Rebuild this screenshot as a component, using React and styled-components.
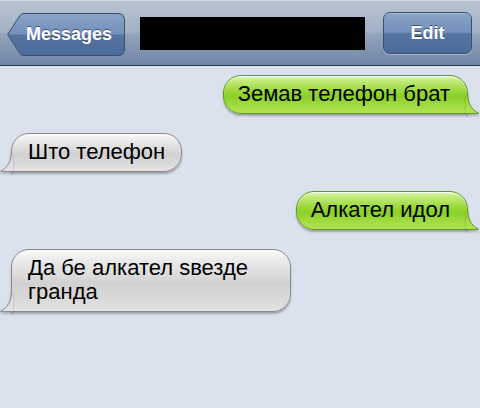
import styled, { createGlobalStyle } from 'styled-components'

const GlobalStyle = createGlobalStyle`
  html, body {
    margin: 0;
    padding: 0;
    background: #dbe2ed;
    font-family: "Liberation Sans", Arial, sans-serif;
  }
`

const Screen = styled.div`
  width: 480px;
  height: 408px;
  overflow: hidden;
  background: #dbe2ed;
`

const NavBar = styled.div`
  height: 66px;
  display: flex;
  align-items: center;
  padding: 0 8px 0 7px;
  border-bottom: 1px solid #2f3a4a;
  border-top: 1px solid #cfd6e0;
  box-sizing: border-box;
  background: linear-gradient(to bottom, #b9c4d3 0%, #a3b1c5 48%, #93a4bb 52%, #7086a5 100%);
`

const BackButton = styled.div`
  position: relative;
  width: 118px;
  height: 43px;
  margin-top: 2px;
  display: flex;
  align-items: center;
  justify-content: center;
  padding-left: 6px;
  box-sizing: border-box;

  & svg {
    position: absolute;
    inset: 0;
  }
`

const ButtonLabel = styled.span`
  position: relative;
  color: #fff;
  font-size: 18px;
  font-weight: bold;
  text-shadow: 0 -1px 0 rgba(0, 0, 0, 0.45);
`

const TitleBlock = styled.div`
  width: 225px;
  height: 33px;
  margin-left: 15px;
  background: #000;
`

const EditButton = styled.div`
  margin-left: auto;
  width: 89px;
  height: 42px;
  display: flex;
  align-items: center;
  justify-content: center;
  box-sizing: border-box;
  border: 1px solid #3c4e69;
  border-radius: 7px;
  background: linear-gradient(to bottom, #8aa3c8 0%, #7391bc 48%, #55749f 52%, #4b6b9c 100%);
  box-shadow: 0 1px 0 rgba(255, 255, 255, 0.35), inset 0 1px 0 rgba(255, 255, 255, 0.3);
`

const Thread = styled.div`
  display: flex;
  flex-direction: column;
  gap: 19px;
  padding: 9px 12px 0 11px;
`

const Row = styled.div`
  display: flex;
  justify-content: ${({ $mine }) => ($mine ? 'flex-end' : 'flex-start')};
`

const Bubble = styled.div`
  position: relative;
  max-width: 280px;
  box-sizing: border-box;
  padding: ${({ $mine }) => ($mine ? '6px 17px 7px 14px' : '6px 16px 7px 16px')};
  font-size: 22px;
  line-height: 24px;
  color: #000;
  border-radius: 18px;
  ${({ $mine }) => ($mine ? 'border-bottom-right-radius: 0;' : 'border-bottom-left-radius: 0;')}
  border: 1px solid ${({ $mine }) => ($mine ? '#5c9a2a' : '#8a8a8a')};
  background: ${({ $mine }) =>
    $mine
      ? 'linear-gradient(to bottom, #e4f7c2 0%, #c4ec7e 12%, #98d738 42%, #8bd028 55%, #a6de45 85%, #b3e352 100%)'
      : 'linear-gradient(to bottom, #fcfcfc 0%, #ededed 14%, #d9d9d9 44%, #d1d1d1 55%, #dcdcdc 85%, #e4e4e4 100%)'};
  box-shadow: 0 2px 2px rgba(0, 0, 0, 0.28), inset 0 1px 1px rgba(255, 255, 255, 0.7);
`

const TailSvg = styled.svg`
  position: absolute;
  bottom: -1px;
  ${({ $mine }) => ($mine ? 'right: -12px;' : 'left: -12px; transform: scaleX(-1);')}
  filter: drop-shadow(0 2px 1px rgba(0, 0, 0, 0.22));
`

const BackShape = () => (
  <svg width="118" height="43" viewBox="0 0 118 43">
    <defs>
      <linearGradient id="backFill" x1="0" y1="0" x2="0" y2="1">
        <stop offset="0" stopColor="#8aa3c8" />
        <stop offset="0.48" stopColor="#7391bc" />
        <stop offset="0.52" stopColor="#55749f" />
        <stop offset="1" stopColor="#4b6b9c" />
      </linearGradient>
    </defs>
    <path
      d="M17 0.5 H111 Q117.5 0.5 117.5 7 V36 Q117.5 42.5 111 42.5 H17 Q14.5 42.5 13 40.5 L1.2 22.5 Q0.6 21.5 1.2 20.5 L13 2.5 Q14.5 0.5 17 0.5 Z"
      fill="url(#backFill)"
      stroke="#3c4e69"
    />
  </svg>
)

const Tail = ({ mine }) => {
  const id = mine ? 'tailGreen' : 'tailGrey'
  return (
    <TailSvg $mine={mine} width="13" height="21" viewBox="0 0 13 21">
      <defs>
        <linearGradient id={id} x1="0" y1="0" x2="0" y2="1">
          <stop offset="0" stopColor={mine ? '#90d22c' : '#d3d3d3'} />
          <stop offset="1" stopColor={mine ? '#b3e352' : '#e4e4e4'} />
        </linearGradient>
      </defs>
      <path d="M0 0 H1.5 C1.5 10 5 16 12.5 20.3 C8 20.5 4 20.5 0 20.5 Z" fill={`url(#${id})`} />
      <path
        d="M1.5 0 C1.5 10 5 16 12.5 20.3 C8 20.5 4 20.5 0 20.5"
        fill="none"
        stroke={mine ? '#5c9a2a' : '#8a8a8a'}
      />
    </TailSvg>
  )
}

const messages = [
  { mine: true, text: 'Земав телефон брат' },
  { mine: false, text: 'Што телефон' },
  { mine: true, text: 'Алкател идол' },
  { mine: false, text: 'Да бе алкател ѕвезде гранда' },
]

export default function App() {
  return (
    <Screen>
      <GlobalStyle />
      <NavBar>
        <BackButton>
          <BackShape />
          <ButtonLabel>Messages</ButtonLabel>
        </BackButton>
        <TitleBlock />
        <EditButton>
          <ButtonLabel>Edit</ButtonLabel>
        </EditButton>
      </NavBar>
      <Thread>
        {messages.map((m, i) => (
          <Row key={i} $mine={m.mine}>
            <Bubble $mine={m.mine}>
              {m.text}
              <Tail mine={m.mine} />
            </Bubble>
          </Row>
        ))}
      </Thread>
    </Screen>
  )
}
